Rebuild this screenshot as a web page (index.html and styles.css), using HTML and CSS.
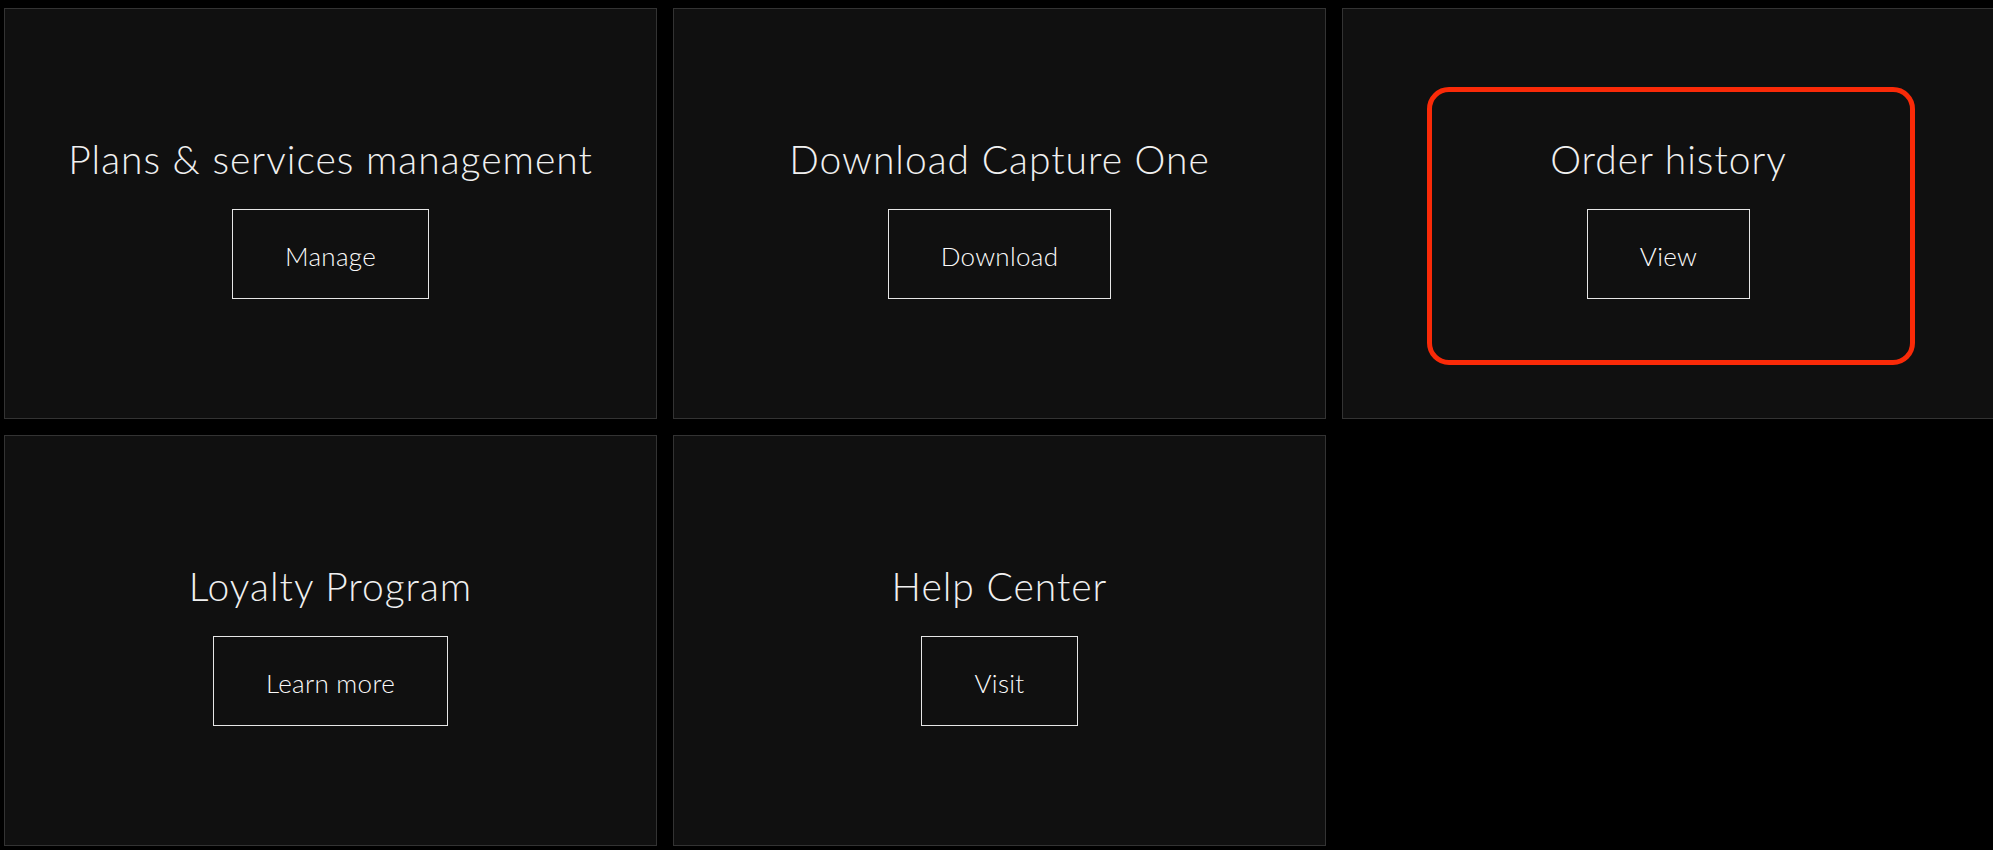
FILE: index.html
```html
<!DOCTYPE html>
<html lang="en">
<head>
<meta charset="utf-8">
<title>Account</title>
<link rel="stylesheet" href="styles.css">
</head>
<body>
<main class="grid">
  <section class="card">
    <h2 class="card-title">Plans &amp; services management</h2>
    <a class="card-btn" href="#">Manage</a>
  </section>
  <section class="card">
    <h2 class="card-title">Download Capture One</h2>
    <a class="card-btn" href="#">Download</a>
  </section>
  <section class="card">
    <h2 class="card-title">Order history</h2>
    <a class="card-btn" href="#">View</a>
    <span class="highlight" aria-hidden="true"></span>
  </section>
  <section class="card">
    <h2 class="card-title">Loyalty Program</h2>
    <a class="card-btn" href="#">Learn more</a>
  </section>
  <section class="card">
    <h2 class="card-title">Help Center</h2>
    <a class="card-btn" href="#">Visit</a>
  </section>
</main>
</body>
</html>
```

FILE: styles.css
```css
html, body {
  margin: 0;
  padding: 0;
  background: #000;
  overflow: hidden;
}

body {
  font-family: "Lato", "Open Sans", "Liberation Sans", sans-serif;
  color: #e8e8e8;
}

.grid {
  display: grid;
  grid-template-columns: repeat(3, 653px);
  grid-auto-rows: 411px;
  gap: 16px;
  padding: 8px 0 0 4px;
  width: max-content;
}

.card {
  position: relative;
  box-sizing: border-box;
  background: #101010;
  border: 1px solid #333;
  display: flex;
  flex-direction: column;
  align-items: center;
  justify-content: center;
}

.card-title {
  margin: 0 0 20px;
  font-size: 39px;
  line-height: 60px;
  font-weight: 300;
  letter-spacing: 1px;
  color: #f0f0f0;
  white-space: nowrap;
}

.card-btn {
  display: block;
  box-sizing: border-box;
  height: 90px;
  padding: 31px 52px 27px;
  border: 1px solid #e6e6e6;
  font-size: 26px;
  line-height: 30px;
  font-weight: 300;
  letter-spacing: 0.3px;
  color: #fafafa;
  text-decoration: none;
  white-space: nowrap;
}

.highlight {
  position: absolute;
  left: 84px;
  top: 78px;
  width: 488px;
  height: 278px;
  box-sizing: border-box;
  border: 5px solid #fa2a08;
  border-radius: 22px;
  pointer-events: none;
}
```
